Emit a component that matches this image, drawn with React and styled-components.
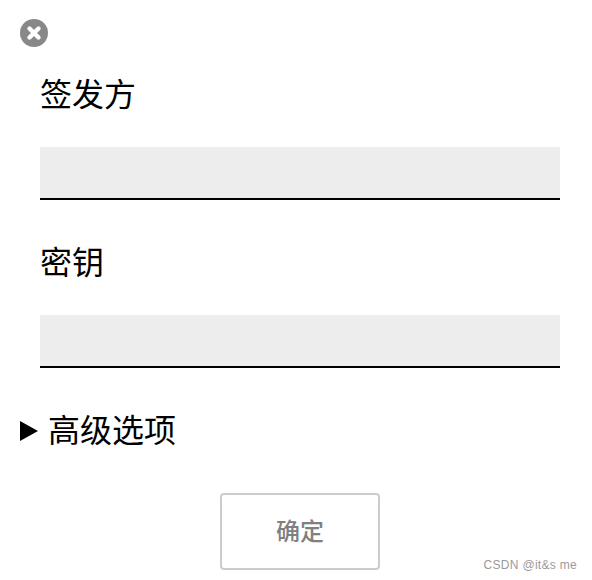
import styled, {createGlobalStyle} from 'styled-components';

const cjk = '"Noto Sans CJK SC", "Liberation Sans", sans-serif';

const GlobalStyle = createGlobalStyle`
    html, body {
        margin: 0;
        padding: 0;
        background: #FFFFFF;
    }

    * {
        box-sizing: border-box;
    }
`;

function Field({label}) {
    return (
        <FieldBox>
            <Label>{label}</Label>
            <Input type='text'/>
        </FieldBox>
    );
}

export default function App() {
    return (
        <Page>
            <GlobalStyle/>
            <CloseButton aria-label='关闭'>
                <svg width='28' height='28' viewBox='0 0 28 28'>
                    <circle cx='14' cy='14' r='14' fill='#888888'/>
                    <path d='M9.5 9.5 L18.5 18.5 M18.5 9.5 L9.5 18.5' stroke='#FFFFFF' strokeWidth='4.4' strokeLinecap='round'/>
                </svg>
            </CloseButton>
            <Field label='签发方'/>
            <Field label='密钥'/>
            <Advanced>
                <Arrow/>
                <AdvancedText>高级选项</AdvancedText>
            </Advanced>
            <Footer>
                <Confirm>确定</Confirm>
            </Footer>
            <Watermark>CSDN @it&amp;s me</Watermark>
        </Page>
    );
}

const Page = styled.div`
    width: 592px;
    height: 580px;
    padding: 19px 32px 0 20px;
    position: relative;
    overflow: hidden;
    font-family: ${cjk};
    color: #000000;
`;

const CloseButton = styled.button`
    width: 28px;
    height: 28px;
    padding: 0;
    border: none;
    background: none;
    display: block;

    svg {
        display: block;
    }
`;

const FieldBox = styled.div`
    margin-left: 20px;
    display: flex;
    flex-direction: column;

    & + & {
        margin-top: 15px;
    }
`;

const Label = styled.label`
    height: 48px;
    margin-top: 21px;
    margin-bottom: 31px;
    font-size: 32px;
    line-height: 48px;
`;

const Input = styled.input`
    width: 520px;
    height: 53px;
    padding: 0 10px;
    border: none;
    border-bottom: 2px solid #000000;
    border-radius: 0;
    background: #EDEDED;
    outline: none;
    display: block;
`;

const Advanced = styled.div`
    height: 48px;
    margin-top: 39px;
    display: flex;
    align-items: center;
    font-size: 32px;
    line-height: 48px;
`;

const AdvancedText = styled.span`
    margin-top: -6px;
`;

const Arrow = styled.i`
    width: 0;
    height: 0;
    margin-right: 10px;
    border-left: 18px solid #000000;
    border-top: 10px solid transparent;
    border-bottom: 10px solid transparent;
`;

const Footer = styled.div`
    width: 560px;
    margin-top: 38px;
    display: flex;
    justify-content: center;
`;

const Confirm = styled.button`
    width: 160px;
    height: 77px;
    padding: 0 0 4px;
    border: 2px solid #CCCCCC;
    border-radius: 4px;
    background: #FFFFFF;
    color: #808080;
    font-family: ${cjk};
    font-size: 24px;
    font-weight: 500;
`;

const Watermark = styled.span`
    position: absolute;
    right: 15px;
    bottom: 7px;
    font-family: "Liberation Sans", Arial, sans-serif;
    font-size: 12px;
    letter-spacing: 0.3px;
    line-height: 16px;
    color: #9A9A9A;
`;
